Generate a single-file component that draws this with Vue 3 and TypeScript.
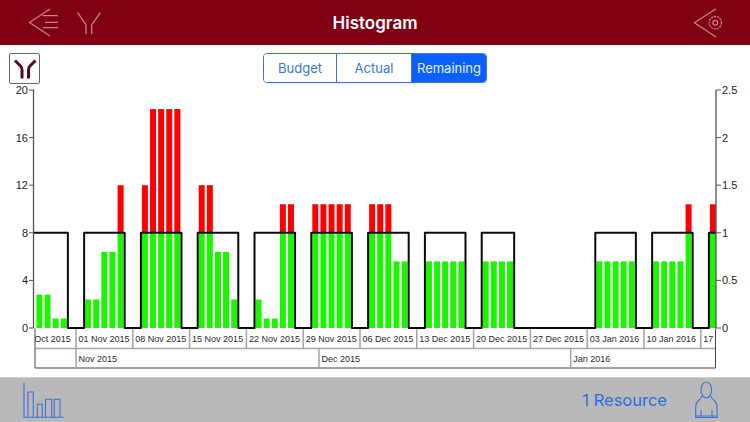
<script setup lang="ts">
import { ref } from 'vue'

const tabs = ['Budget', 'Actual', 'Remaining']
const active = ref('Remaining')

// chart scale, coordinates are page pixels (viewBox starts at y=85)
const baseY = 328
const unit = 11.9
const weekW = 56.8
const dayW = weekW / 7
const firstWeek = 19.2
const capacity = 8

const y = (hours: number) => baseY - hours * unit

interface Week {
  label: string
  hours: number[]
}

const weeks: Week[] = [
  { label: '25 Oct 2015', hours: [0, 2.8, 2.8, 0.8, 0.8] },
  { label: '01 Nov 2015', hours: [2.4, 2.4, 6.4, 6.4, 12] },
  { label: '08 Nov 2015', hours: [12, 18.4, 18.4, 18.4, 18.4] },
  { label: '15 Nov 2015', hours: [12, 12, 6.4, 6.4, 2.4] },
  { label: '22 Nov 2015', hours: [2.4, 0.8, 0.8, 10.4, 10.4] },
  { label: '29 Nov 2015', hours: [10.4, 10.4, 10.4, 10.4, 10.4] },
  { label: '06 Dec 2015', hours: [10.4, 10.4, 10.4, 5.6, 5.6] },
  { label: '13 Dec 2015', hours: [5.6, 5.6, 5.6, 5.6, 5.6] },
  { label: '20 Dec 2015', hours: [5.6, 5.6, 5.6, 5.6] },
  { label: '27 Dec 2015', hours: [] },
  { label: '03 Jan 2016', hours: [5.6, 5.6, 5.6, 5.6, 5.6] },
  { label: '10 Jan 2016', hours: [5.6, 5.6, 5.6, 5.6, 10.4] },
  { label: '17', hours: [10.4, 10.4] },
]

const weekX = (i: number) => firstWeek + weekW * i

const bars = weeks.flatMap((week, i) =>
  week.hours.map((h, d) => ({
    key: `${i}-${d}`,
    x: weekX(i) + dayW * (d + 1) + 1,
    green: Math.min(h, capacity),
    red: Math.max(h - capacity, 0),
  })),
)

// capacity outline: up on the first working day, down after the last one
let outline = `M 20 ${baseY}`
weeks.forEach((week, i) => {
  if (!week.hours.length) return
  const a = weekX(i) + dayW
  const b = a + dayW * week.hours.length
  outline += ` L ${a} ${baseY} L ${a} ${y(capacity)} L ${b} ${y(capacity)} L ${b} ${baseY}`
})

const leftTicks = [0, 4, 8, 12, 16, 20]
const rightTicks = ['0', '0.5', '1', '1.5', '2', '2.5']
const months = [
  { label: 'Nov 2015', x: 76 },
  { label: 'Dec 2015', x: 319 },
  { label: 'Jan 2016', x: 570.7 },
]
</script>

<template>
  <div class="screen">
    <header class="topbar">
      <div class="topbar-side">
        <svg class="nav-icon" width="36" height="45" viewBox="26 0 36 45">
          <path d="M50 9 L29.5 22.5 L50 36 M42.7 15.7 H58 M45 22.3 H58 M42.7 27.7 H58" />
        </svg>
        <svg class="nav-icon" width="26" height="45" viewBox="75 0 26 45">
          <path d="M76.7 12.7 L85 25 V34.3 M99.3 12.7 L90.7 25 V34.3" />
        </svg>
      </div>
      <h1 class="title">Histogram</h1>
      <div class="topbar-side end">
        <svg class="nav-icon" width="30" height="45" viewBox="692 0 30 45">
          <path d="M716 8.7 L694.5 22.7 L716 37" />
          <circle cx="715.3" cy="22.7" r="6.2" stroke-dasharray="2.2 0.8" />
          <circle cx="715.3" cy="22.7" r="2.4" />
        </svg>
      </div>
    </header>

    <div class="toolbar">
      <button class="filter-btn" type="button">
        <svg width="24" height="24" viewBox="12 60 24 24">
          <path d="M14 63.5 L19.5 69 Q21 70.5 21 73 V81.5 M34.5 63.5 L29 69 Q27.5 70.5 27.5 73 V81.5" />
        </svg>
      </button>
      <div class="segments">
        <button
          v-for="tab in tabs"
          :key="tab"
          type="button"
          class="segment"
          :class="{ active: tab === active }"
          @click="active = tab"
        >
          {{ tab }}
        </button>
      </div>
    </div>

    <svg class="chart" width="750" height="292" viewBox="0 85 750 292">
      <defs>
        <clipPath id="plot"><rect x="34" y="85" width="682" height="245" /></clipPath>
        <clipPath id="rows"><rect x="35" y="329" width="679" height="40" /></clipPath>
      </defs>

      <g clip-path="url(#plot)">
        <g v-for="bar in bars" :key="bar.key">
          <rect :x="bar.x" :y="y(bar.green)" width="6" :height="bar.green * unit" fill="#1cf500" />
          <rect
            v-if="bar.red"
            :x="bar.x"
            :y="y(bar.green + bar.red)"
            width="6"
            :height="bar.red * unit"
            fill="#fe0000"
          />
        </g>
        <path :d="outline" fill="none" stroke="#0a0a0a" stroke-width="2" stroke-linejoin="round" />
      </g>

      <path d="M33.5 90 V328 M716 90 V328" fill="none" stroke="#555" stroke-width="1.3" />
      <g v-for="t in leftTicks" :key="t">
        <line x1="29" x2="34" :y1="y(t)" :y2="y(t)" stroke="#555" />
        <text class="axis" x="28" :y="y(t) + 4" text-anchor="end">{{ t }}</text>
      </g>
      <g v-for="(t, i) in rightTicks" :key="t">
        <line x1="716" x2="721" :y1="y(i * 4)" :y2="y(i * 4)" stroke="#555" />
        <text class="axis" x="722" :y="y(i * 4) + 4">{{ t }}</text>
      </g>

      <!-- date rows under the plot -->
      <path d="M35 348.5 H715" stroke="#a8a8a8" stroke-width="1.5" />
      <path d="M35 328.5 V368 H715.5 V328.5" fill="none" stroke="#444" />
      <template v-for="(week, i) in weeks" :key="week.label">
        <line
          v-if="i > 0"
          :x1="weekX(i)"
          :x2="weekX(i)"
          y1="329"
          y2="348"
          stroke="#a8a8a8"
          stroke-width="1.6"
        />
        <text class="date" :x="weekX(i) + 2.5" y="342" clip-path="url(#rows)">{{ week.label }}</text>
      </template>
      <template v-for="m in months" :key="m.label">
        <line :x1="m.x" :x2="m.x" y1="349" y2="367.5" stroke="#a8a8a8" stroke-width="1.6" />
        <text class="date" :x="m.x + 2.5" y="362">{{ m.label }}</text>
      </template>
    </svg>

    <footer class="bottombar">
      <svg class="foot-icon" width="42" height="37" viewBox="23 381 42 37">
        <path d="M24 381.7 V416.3 H63.5 M28 416 V391 H33.3 V416 M37.3 416 V403.3 H42.3 V416 M45.5 416 V398.3 H51.7 V416 M54.3 416 V398.3 H60 V416" />
      </svg>
      <span class="resource">1 Resource</span>
      <svg class="foot-icon person" width="26" height="38" viewBox="695 381 26 38">
        <ellipse cx="707.3" cy="390" rx="5.3" ry="8" />
        <path d="M702.5 396 C703 400 696.7 400 696.7 406 V417.5 H718 V406 C718 400 712 400 712.3 396 M702 410 V417 M713 410 V417 M696.7 416 H718" />
      </svg>
    </footer>
  </div>
</template>

<style scoped>
.screen {
  width: 750px;
  height: 422px;
  display: flex;
  flex-direction: column;
  overflow: hidden;
  background: #fff;
  font-family: Inter, "Liberation Sans", sans-serif;
}

.topbar {
  height: 45px;
  flex: none;
  display: grid;
  grid-template-columns: 1fr auto 1fr;
  align-items: center;
  background: #7e0011;
}

.topbar-side {
  display: flex;
  align-items: center;
  gap: 14px;
  padding-left: 26px;
}

.topbar-side.end {
  justify-content: flex-end;
  padding: 0 28px 0 0;
}

.nav-icon {
  display: block;
  fill: none;
  stroke: #c8808a;
  stroke-width: 1.3;
}

.title {
  margin: 0;
  color: #fff;
  font-size: 17px;
  font-weight: 600;
}

.toolbar {
  height: 40px;
  flex: none;
  display: grid;
  grid-template-columns: 1fr auto 1fr;
  align-items: start;
  padding-top: 8px;
  box-sizing: border-box;
}

.filter-btn {
  grid-column: 1;
  width: 31px;
  height: 31px;
  margin-left: 9px;
  padding: 0;
  display: flex;
  align-items: center;
  justify-content: center;
  border: 1px solid #666;
  border-radius: 2px;
  background: #fff;
}

.filter-btn svg {
  fill: none;
  stroke: #5a0a14;
  stroke-width: 3;
}

.segments {
  grid-column: 2;
  display: flex;
  width: 224px;
  height: 30px;
  box-sizing: border-box;
  border: 1px solid #3a76dc;
  border-radius: 4px;
  overflow: hidden;
}

.segment {
  width: 75px;
  padding: 0;
  border: 0;
  border-right: 1px solid #3a76dc;
  background: #fff;
  color: #3a76dc;
  font: 13px Inter, "Liberation Sans", sans-serif;
}

.segment:first-child {
  width: 73px;
}

.segment:last-child {
  flex: 1;
  border-right: 0;
}

.segment.active {
  background: #0a60fa;
  color: #e8f0ff;
}

.chart {
  display: block;
  flex: none;
}

.axis {
  font: 11px "Liberation Sans", sans-serif;
  fill: #222;
}

.date {
  font: 9px "Liberation Sans", sans-serif;
  fill: #2a2a2a;
}

.bottombar {
  height: 45px;
  flex: none;
  display: flex;
  align-items: center;
  padding: 0 30px 0 23px;
  box-sizing: border-box;
  background: #b9b9b9;
  border-top: 1px solid #cfcfcf;
}

.foot-icon {
  display: block;
  fill: none;
  stroke: #3a72d6;
  stroke-width: 1.1;
}

.resource {
  margin-left: auto;
  margin-right: 27px;
  color: #2a6fdc;
  font-size: 16.5px;
}
</style>
